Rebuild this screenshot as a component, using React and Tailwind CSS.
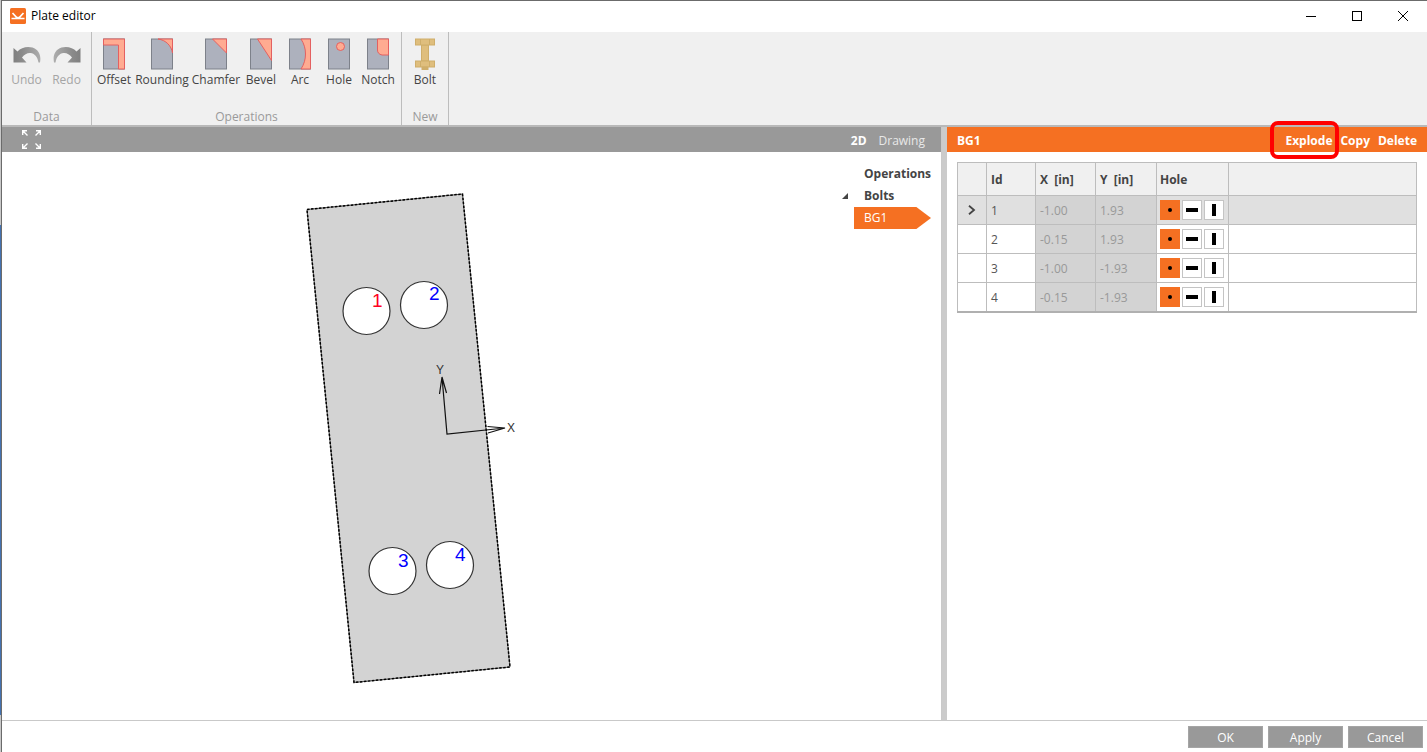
import React from 'react';

const plate = '#adb1bd';
const plateLine = '#7d818a';
const cut = '#ffab91';
const cutLine = '#e46060';

const UndoIcon = ({ flip }) => (
    <svg width="28" height="32" viewBox="0 0 28 32" className={flip ? '-scale-x-100' : ''} aria-hidden="true">
        <defs>
            <linearGradient id={flip ? 'redoFill' : 'undoFill'} x1="0" x2="1">
                <stop offset="0" stopColor="#808080" />
                <stop offset="0.3" stopColor="#8a8a8a" />
                <stop offset="1" stopColor="#adadad" />
            </linearGradient>
        </defs>
        <path
            d="M.5 10 4.500 13.500C8 9.500 14 8 19.500 9.500C25.500 11.500 28.500 17 27 24.500H25.500C24.500 18.500 21.500 15.500 17.500 15C14 14.800 11.500 16.500 9 19.500L13.500 24.500H.5Z"
            fill={flip ? 'url(#redoFill)' : 'url(#undoFill)'}
        />
    </svg>
);

const PlateIcon = ({ children }) => (
    <svg width="22" height="32" viewBox="0 0 22 32" aria-hidden="true">
        <rect x="0.5" y="1" width="21" height="30" fill={plate} stroke={plateLine} />
        <g fill={cut} stroke={cutLine}>{children}</g>
    </svg>
);

const BoltIcon = () => (
    <svg width="20" height="32" viewBox="0 0 20 32" aria-hidden="true">
        <g fill="#dfbe7d" stroke="#cfae6b">
            <rect x="6.500" y="7" width="7" height="16" />
            <rect x="0.5" y="1" width="19" height="6" />
            <rect x="0.5" y="23" width="19" height="6" />
            <path d="M5.500 1V7M14.500 1V7M5.500 23V29M14.500 23V29" />
            <rect x="7" y="29" width="6" height="2.500" fill="#cfae6b" />
        </g>
    </svg>
);

const groups = [
    {
        name: 'Data',
        className: 'w-[89px] justify-center',
        disabled: true,
        tools: [
            { label: 'Undo', icon: <UndoIcon />, width: 'w-9' },
            { label: 'Redo', icon: <UndoIcon flip />, width: 'w-9' },
        ],
    },
    {
        name: 'Operations',
        className: 'w-[309px] pl-1',
        tools: [
            { label: 'Offset', icon: <PlateIcon><path d="M.5 1H21.500V31H15.500V7H.5Z" /></PlateIcon>, width: 'w-9' },
            { label: 'Rounding', icon: <PlateIcon><path d="M7 1H21.500V15C20.500 8 15 2 7 1Z" /></PlateIcon>, width: 'w-[52px]' },
            { label: 'Chamfer', icon: <PlateIcon><path d="M7.500 1H21.500V15Z" /></PlateIcon>, width: 'w-12' },
            { label: 'Bevel', icon: <PlateIcon><path d="M7.500 1H21.500V22.500Z" /></PlateIcon>, width: 'w-[34px]' },
            { label: 'Arc', icon: <PlateIcon><path d="M12 1H21.500V31H12C18 22 18 10 12 1Z" /></PlateIcon>, width: 'w-9' },
            { label: 'Hole', icon: <PlateIcon><circle cx="12.500" cy="8.500" r="4" /></PlateIcon>, width: 'w-[34px]' },
            { label: 'Notch', icon: <PlateIcon><path d="M10.500 1H21.500V17H15Q10.500 16 10.500 12Z" /></PlateIcon>, width: 'w-9' },
        ],
    },
    {
        name: 'New',
        className: 'w-[46px] justify-center',
        tools: [{ label: 'Bolt', icon: <BoltIcon />, width: 'w-9' }],
    },
];

const bolts = [
    { id: 1, x: '-1.00', y: '1.93' },
    { id: 2, x: '-0.15', y: '1.93' },
    { id: 3, x: '-1.00', y: '-1.93' },
    { id: 4, x: '-0.15', y: '-1.93' },
];

const holes = [
    { id: 1, cx: 364.5, cy: 159, tx: 370, ty: 155, color: '#ff0022' },
    { id: 2, cx: 422, cy: 153, tx: 427, ty: 148, color: '#0000ff' },
    { id: 3, cx: 390.5, cy: 419, tx: 396, ty: 415, color: '#0000ff' },
    { id: 4, cx: 448, cy: 413, tx: 453, ty: 409, color: '#0000ff' },
];

const TitleBar = () => (
    <header className="flex h-8 items-center border-t border-[#6b6b6b] bg-white pr-px pb-0.5 pl-2">
        <svg width="16" height="16" viewBox="0 0 16 16" aria-hidden="true">
            <rect width="16" height="16" rx="1.500" fill="#f57022" />
            <path d="M1.500 10.500H14.500M2.500 5 7 9.800M13.500 5 9 9.800" fill="none" stroke="#fff" strokeWidth="1.700" />
            <path d="M5 10.500 8 8.500 11 10.500Z" fill="#fff" />
        </svg>
        <h1 className="ml-[5px] flex-1 text-xs text-black">Plate editor</h1>
        <button aria-label="Minimize" className="flex h-7 w-[46px] items-center justify-center">
            <svg width="10" height="10" stroke="#000"><path d="M0 5.500H10" /></svg>
        </button>
        <button aria-label="Maximize" className="flex h-7 w-[46px] items-center justify-center">
            <svg width="10" height="10" fill="none" stroke="#000"><rect x="0.5" y="0.5" width="9" height="9" /></svg>
        </button>
        <button aria-label="Close" className="flex h-7 w-[46px] items-center justify-center">
            <svg width="10" height="10" stroke="#000"><path d="M0 0 10 10M10 0 0 10" /></svg>
        </button>
    </header>
);

const Ribbon = () => (
    <nav className="flex h-[95px] border-b-2 border-[#b9b9b9] bg-[#f0f0f0]">
        {groups.map((group) => (
            <section key={group.name} className="flex flex-col items-center justify-between border-r border-[#bdbdbd] pt-1.5">
                <div className={`flex gap-1 ${group.className}`}>
                    {group.tools.map((tool) => (
                        <button
                            key={tool.label}
                            disabled={group.disabled}
                            className={`flex shrink-0 flex-col items-center ${tool.width} ${group.disabled ? 'text-[#a5a5a5]' : 'text-[#444]'}`}
                        >
                            {tool.icon}
                            <span className="whitespace-nowrap leading-5">{tool.label}</span>
                        </button>
                    ))}
                </div>
                <div className="leading-4 text-[#9a9a9a]">{group.name}</div>
            </section>
        ))}
    </nav>
);

// Plate outline, bolt holes and the local coordinate system
const PlateDrawing = () => (
    <svg width="520" height="540" viewBox="0 0 520 540" className="shrink-0" role="img" aria-label="Plate">
        <path d="M305 57.500 460.500 42 508 515 352 530.500Z" fill="#d3d3d3" stroke="#555" />
        <path d="M305 57.500 460.500 42 508 515 352 530.500Z" fill="none" stroke="#000" strokeWidth="1.500" strokeDasharray="2.500 1.500" />
        {holes.map((hole) => (
            <g key={hole.id}>
                <circle cx={hole.cx} cy={hole.cy} r="23.500" fill="#fff" stroke="#333" strokeWidth="1.200" />
                <text x={hole.tx} y={hole.ty} fill={hole.color} fontSize="19" className="font-['Liberation_Sans',sans-serif]">{hole.id}</text>
            </g>
        ))}
        <path d="M440 225 445 282 503 276M437.500 242 440 225 444.500 241M485.500 274.500 503 276 486 281" fill="none" stroke="#111" strokeWidth="1.200" />
        <g fill="#333" fontSize="12" className="font-['Liberation_Sans',sans-serif]">
            <text x="434" y="222">Y</text>
            <text x="505" y="280">X</text>
        </g>
    </svg>
);

const Viewer = () => (
    <main className="flex min-w-0 flex-1 flex-col border-r border-[#c9c9c9]">
        <div className="flex h-[25px] items-center bg-[#999] pr-4 pl-5 text-white">
            <button aria-label="Zoom to fit">
                <svg width="19" height="19" viewBox="0 0 19 19" fill="none" stroke="#fff" strokeWidth="1.400">
                    <path d="M.7 5V.7H5M1 1 5.500 5.500M14 .7H18.300V5M18 1 13.500 5.500M.7 14V18.300H5M1 18 5.500 13.500M14 18.300H18.300V14M18 18 13.500 13.500" />
                </svg>
            </button>
            <div className="ml-auto flex gap-3 pt-0.5">
                <button className="font-bold">2D</button>
                <button className="text-[#e8e8e8]">Drawing</button>
            </div>
        </div>
        <div className="flex flex-1 justify-between overflow-hidden">
            <PlateDrawing />
            <ul className="mr-2.5 w-[77px] pt-[11px] leading-[22px]">
                <li className="pl-2.5 font-bold text-[#444]">Operations</li>
                <li>
                    <div className="relative pl-2.5 font-bold text-[#444]">
                        <svg width="6" height="6" className="absolute top-2 -left-3" aria-hidden="true"><path d="M6 0V6H0Z" fill="#444" /></svg>
                        Bolts
                    </div>
                    <button className="flex h-[22px] w-full items-center bg-[#f57022] pl-2.5 text-white [clip-path:polygon(0_0,81%_0,100%_50%,81%_100%,0_100%)]">
                        BG1
                    </button>
                </li>
            </ul>
        </div>
    </main>
);

const HoleShape = ({ bolt }) => (
    <fieldset className="flex gap-0.5" aria-label={`Hole ${bolt.id}`}>
        {['Round', 'Horizontal slot', 'Vertical slot'].map((shape, index) => (
            <label key={shape} className="relative flex size-5 items-center justify-center border border-[#c4c4c4] bg-white has-checked:border-[#f57022] has-checked:bg-[#f57022]">
                <input type="radio" name={`hole-${bolt.id}`} aria-label={shape} defaultChecked={index === 0} className="sr-only" />
                {index === 0 && <span className="size-1 rounded-full bg-black" />}
                {index === 1 && <span className="h-1 w-3 bg-black" />}
                {index === 2 && <span className="h-3 w-1 bg-black" />}
            </label>
        ))}
    </fieldset>
);

const BoltTable = () => (
    <table className="w-full table-fixed border-collapse border-b-2 border-[#b0b0b0] text-left text-[#555] [&_td]:border [&_td]:border-[#bdbdbd] [&_th]:border [&_th]:border-[#bdbdbd] [&_th]:pt-0.5">
        <colgroup>
            <col className="w-[29px]" />
            <col className="w-[49px]" />
            <col className="w-[60px]" />
            <col className="w-[61px]" />
            <col className="w-[72px]" />
            <col />
        </colgroup>
        <thead>
            <tr className="h-[33px] bg-[#f0f0f0] text-[#444]">
                <th />
                <th className="pl-1">Id</th>
                <th className="pl-1 whitespace-pre">X  [in]</th>
                <th className="pl-1 whitespace-pre">Y  [in]</th>
                <th className="pl-[3px]">Hole</th>
                <th />
            </tr>
        </thead>
        <tbody>
            {bolts.map((bolt, index) => (
                <tr key={bolt.id} className={`h-[29px] ${index === 0 ? 'bg-[#e0e0e0]' : 'bg-white'}`}>
                    <td>
                        {index === 0 && (
                            <svg width="8" height="10" className="mx-auto" fill="none" stroke="#444" strokeWidth="1.800"><path d="M1 .8 6 5 1 9.200" /></svg>
                        )}
                    </td>
                    <td className="pt-0.5 pl-1">{bolt.id}</td>
                    <td className="bg-[#d3d3d3] pt-0.5 pl-1 text-[#999]">{bolt.x}</td>
                    <td className="bg-[#d3d3d3] pt-0.5 pl-1 text-[#999]">{bolt.y}</td>
                    <td className="pl-[3px]"><HoleShape bolt={bolt} /></td>
                    <td />
                </tr>
            ))}
        </tbody>
    </table>
);

const BoltPanel = () => (
    <aside className="w-[480px] shrink-0">
        <div className="relative flex h-[25px] items-center bg-[#f57022] px-2.5 pt-0.5 font-bold text-white">
            <h2 className="flex-1">BG1</h2>
            <div className="flex gap-2">
                <button>Explode</button>
                <button>Copy</button>
                <button>Delete</button>
            </div>
            <div className="pointer-events-none absolute -top-1.5 right-[88px] h-[38px] w-[69px] rounded-lg border-4 border-[#ff0000]" />
        </div>
        <div className="px-2.5 pt-2.5">
            <BoltTable />
        </div>
    </aside>
);

export default function App() {
    return (
        <div className="flex min-h-screen bg-white font-['Open_Sans','Noto_Sans',sans-serif] text-xs">
            <div className="flex w-px flex-col">
                <div className="flex-[225] bg-[#c8c8c8]" />
                <div className="flex-[490] bg-[#4472b0]" />
                <div className="flex-[37] bg-[#c8c8c8]" />
            </div>
            <div className="flex min-w-0 flex-1 flex-col border-l border-[#6b6b6b]">
                <TitleBar />
                <Ribbon />
                <div className="flex flex-1">
                    <Viewer />
                    <div className="w-[5px] bg-[#cbcbcb]" />
                    <BoltPanel />
                </div>
                <footer className="flex h-8 justify-end gap-[5px] border-t border-[#c9c9c9] px-1 pt-[5px]">
                    {['OK', 'Apply', 'Cancel'].map((label) => (
                        <button key={label} className="h-[22px] w-[75px] border border-[#a5a5a5] bg-[#999] pt-px text-white">{label}</button>
                    ))}
                </footer>
            </div>
        </div>
    );
}
